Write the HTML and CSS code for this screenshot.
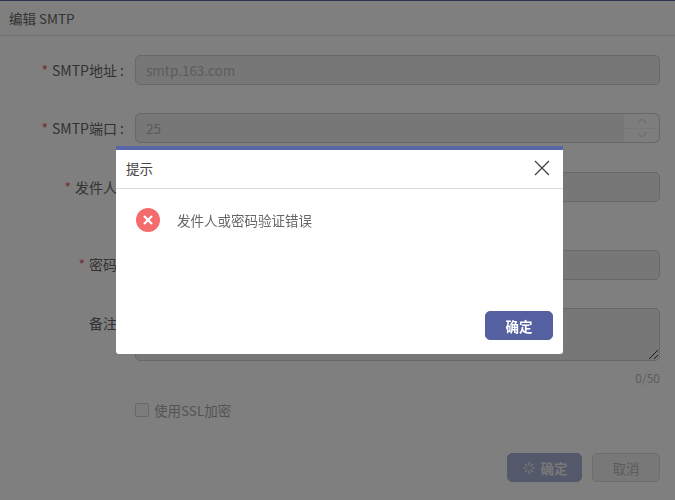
FILE: index.html
```html
<!DOCTYPE html>
<html lang="zh-CN">
<head>
    <meta charset="UTF-8">
    <meta name="viewport" content="width=device-width, initial-scale=1.0">
    <title>编辑 SMTP</title>
    <link rel="stylesheet" href="styles.css">
</head>
<body>

<div class="page">
    <div class="page-title">编辑 SMTP</div>

    <form class="form">
        <div class="row row-first">
            <label class="label"><span class="req">*</span>SMTP地址 :</label>
            <div class="input">smtp.163.com</div>
        </div>
        <div class="row row-port">
            <label class="label"><span class="req">*</span>SMTP端口 :</label>
            <div class="input input-number">
                25
                <div class="spin">
                    <span class="spin-btn">
                        <svg width="10" height="6" viewBox="0 0 10 6"><path d="M1 5l4-4 4 4" fill="none" stroke="#d0d0d0" stroke-width="1"/></svg>
                    </span>
                    <span class="spin-btn">
                        <svg width="10" height="6" viewBox="0 0 10 6"><path d="M1 1l4 4 4-4" fill="none" stroke="#d0d0d0" stroke-width="1"/></svg>
                    </span>
                </div>
            </div>
        </div>
        <div class="row row-sender">
            <label class="label"><span class="req">*</span>发件人 :</label>
            <div class="input"></div>
        </div>
        <div class="row row-pass">
            <label class="label"><span class="req">*</span>密码 :</label>
            <div class="input"></div>
        </div>
        <div class="row row-note">
            <label class="label">备注 :</label>
            <div class="textarea">
                <svg class="resize" width="11" height="11" viewBox="0 0 11 11"><path d="M1 10L10 1M6 10l4-4" stroke="#333" stroke-width="1"/></svg>
            </div>
        </div>
        <div class="counter">0/50</div>
        <div class="check-row">
            <span class="checkbox"></span>
            <span class="check-text">使用SSL加密</span>
        </div>
        <div class="actions">
            <button type="button" class="btn btn-primary">
                <svg width="14" height="14" viewBox="0 0 14 14"><path d="M7 1v3.500M7 9.500V13M1 7h3.500M9.500 7H13M2.800 2.800l2.500 2.500M8.700 8.700l2.500 2.500M11.200 2.800L8.700 5.300M5.300 8.700l-2.500 2.500" stroke="#eee" stroke-width="1.200" fill="none"/></svg>
                确定
            </button>
            <button type="button" class="btn btn-cancel">取消</button>
        </div>
    </form>
</div>

<div class="mask"></div>

<div class="modal">
    <div class="modal-head">
        <span class="modal-title">提示</span>
        <svg class="modal-close" width="16" height="16" viewBox="0 0 16 16"><path d="M1 1l14 14M15 1L1 15" stroke="#444" stroke-width="1.300" fill="none"/></svg>
    </div>
    <div class="modal-body">
        <span class="modal-icon">
            <svg width="24" height="24" viewBox="0 0 24 24"><circle cx="12" cy="12" r="12" fill="#f56c6c"/><path d="M8 8l8 8M16 8l-8 8" stroke="#fff" stroke-width="2.200" fill="none"/></svg>
        </span>
        <span class="modal-text">发件人或密码验证错误</span>
    </div>
    <div class="modal-foot">
        <button type="button" class="modal-ok">确定</button>
    </div>
</div>

</body>
</html>
```

FILE: styles.css
```css
body {
    margin: 0;
    padding: 0;
    background-color: #fff;
    font-family: "Noto Sans CJK SC", "Noto Sans", sans-serif;
    font-size: 13.5px;
    color: #666;
    overflow: hidden;
}

.page {
    height: 500px;
    box-sizing: border-box;
    border-top: 1px solid #5c669f;
}

.page-title {
    height: 35px;
    line-height: 34px;
    padding-left: 9px;
    color: #666;
    border-bottom: 1px solid #ddd;
    box-sizing: border-box;
}

.form {
    padding-right: 15px;
}

.row {
    display: flex;
}

.row-first {
    margin-top: 19px;
}

.row-port {
    margin-top: 28px;
}

.row-sender {
    margin-top: 29px;
}

.row-pass {
    margin-top: 48px;
}

.row-note {
    margin-top: 28px;
}

.label {
    width: 127px;
    margin-right: 8px;
    padding-right: 3px;
    box-sizing: border-box;
    height: 30px;
    line-height: 30px;
    font-size: 14px;
    text-align: right;
    white-space: nowrap;
    flex-shrink: 0;
}

.row-pass .label {
    line-height: 29px;
}

.req {
    color: #e06060;
    margin-right: 4px;
}

.input {
    flex: 1;
    position: relative;
    height: 30px;
    line-height: 28px;
    box-sizing: border-box;
    padding-left: 10px;
    background-color: #eeeeee;
    border: 1px solid #d0d0d0;
    border-radius: 5px;
    color: #b8b8b8;
}

.spin {
    position: absolute;
    top: 0;
    right: 0;
    bottom: 0;
    width: 35px;
    display: flex;
    flex-direction: column;
    background-color: #fafafa;
    border-radius: 0 5px 5px 0;
}

.spin-btn {
    flex: 1;
    display: flex;
    align-items: center;
    justify-content: center;
}

.spin-btn:first-child {
    border-bottom: 1px solid #eee;
}

.textarea {
    flex: 1;
    position: relative;
    height: 53px;
    box-sizing: border-box;
    background-color: #eeeeee;
    border: 1px solid #d0d0d0;
    border-radius: 5px;
}

.resize {
    position: absolute;
    right: 0;
    bottom: 0;
}

.counter {
    margin-top: 7px;
    height: 20px;
    line-height: 20px;
    text-align: right;
    font-size: 12px;
    color: #bbb;
}

.check-row {
    display: flex;
    align-items: center;
    gap: 5px;
    margin-top: 11px;
    margin-left: 135px;
    height: 22px;
}

.checkbox {
    width: 12px;
    height: 12px;
    background-color: #f8f8f8;
    border: 1px solid #d0d0d0;
    border-radius: 2px;
}

.check-text {
    color: #a8a8a8;
}

.actions {
    display: flex;
    justify-content: flex-end;
    gap: 10px;
    margin-top: 32px;
}

.btn {
    height: 29px;
    width: 68px;
    padding: 0;
    border-radius: 5px;
    font-family: inherit;
    font-size: 13.5px;
    font-weight: bold;
    display: flex;
    align-items: center;
    justify-content: center;
    gap: 5px;
}

.btn-primary {
    width: 75px;
    background-color: #a8b0d6;
    border: 1px solid #a8b0d6;
    color: #eee;
}

.btn-cancel {
    background-color: #f0f0f0;
    border: 1px solid #dcdcdc;
    color: #b8b8b8;
    font-weight: normal;
}

.mask {
    position: fixed;
    top: 0;
    left: 0;
    right: 0;
    bottom: 0;
    background-color: rgba(0, 0, 0, 0.5);
}

.modal {
    position: fixed;
    top: 146px;
    left: 116px;
    width: 447px;
    height: 208px;
    box-sizing: border-box;
    background-color: #fff;
    border-top: 4px solid #5a65a5;
    border-radius: 0 0 3px 3px;
    display: flex;
    flex-direction: column;
}

.modal-head {
    height: 39px;
    box-sizing: border-box;
    display: flex;
    align-items: center;
    justify-content: space-between;
    padding: 0 13px 2px 10px;
    border-bottom: 1px solid #dcdcdc;
}

.modal-title {
    color: #444;
}

.modal-body {
    flex: 1;
    display: flex;
    align-items: flex-start;
    padding: 19px 0 0 20px;
}

.modal-icon {
    width: 24px;
    height: 24px;
    margin-right: 17px;
}

.modal-icon svg {
    display: block;
}

.modal-text {
    line-height: 25px;
    color: #666;
}

.modal-foot {
    display: flex;
    justify-content: flex-end;
    padding: 0 10px 14px;
}

.modal-ok {
    width: 68px;
    height: 29px;
    padding: 0;
    background-color: #54609f;
    border: 1px solid #54609f;
    border-radius: 5px;
    color: #fff;
    font-family: inherit;
    font-size: 13.5px;
    font-weight: bold;
}
```
